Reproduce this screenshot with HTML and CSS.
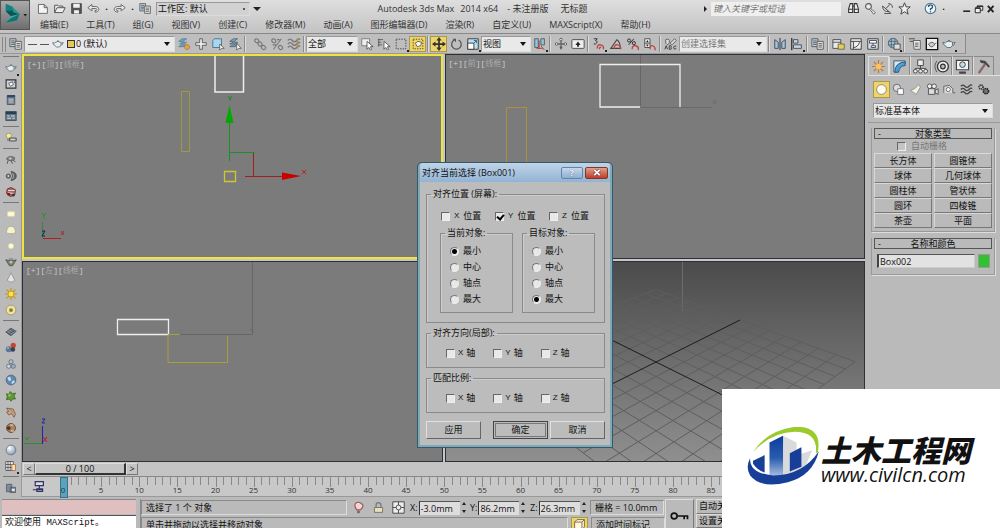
FILE: index.html
```html
<!DOCTYPE html>
<html lang="zh-CN">
<head>
<meta charset="utf-8">
<title>Autodesk 3ds Max 2014 x64</title>
<link rel="stylesheet" href="styles.css">
</head>
<body>
<svg class="defs" aria-hidden="true">
  <defs>
    <linearGradient id="g-blue" x1="0" y1="0" x2="0" y2="1"><stop offset="0" stop-color="#0c3c9c"/><stop offset=".55" stop-color="#2a5cae"/><stop offset="1" stop-color="#a9c0e0"/></linearGradient>
    <radialGradient id="g-ball" cx=".35" cy=".3" r=".8"><stop offset="0" stop-color="#fff"/><stop offset="1" stop-color="#7d8fa6"/></radialGradient>
  </defs>
  <symbol id="i-new" viewBox="0 0 16 16"><path d="M3 3h7l4 4v7H3zM10 3v4h4" fill="#f4f4f4" stroke="#555"/></symbol>
  <symbol id="i-open" viewBox="0 0 16 16"><path d="M2 13V4h4l1 1h5v2M2 13l3-6h10l-3 6z" fill="#eee" stroke="#555" stroke-width="1.2"/></symbol>
  <symbol id="i-save" viewBox="0 0 16 16"><path d="M2 2h12v12H2z" fill="#555" stroke="#444"/><path d="M4 2h8v5H4zM5 10h6v4H5z" fill="#f2f2f2"/></symbol>
  <symbol id="i-undo" viewBox="0 0 16 16"><path d="M1 7l5-4v2.500h4c6 0 6 7 0 7v-2c3 0 3-2.500 0-2.500H6V11z" fill="#e8e8e8" stroke="#555"/></symbol>
  <symbol id="i-redo" viewBox="0 0 16 16"><path d="M15 7l-5-4v2.500H6c-6 0-6 7 0 7v-2c-3 0-3-2.500 0-2.500h4V11z" fill="#e8e8e8" stroke="#555"/></symbol>
  <symbol id="i-layers" viewBox="0 0 16 16"><path d="M1 2h7v9H1z" fill="#bcd0dc" stroke="#555"/><path d="M2.500 4.500h4M2.500 6.500h4M2.500 8.500h4" stroke="#555"/><path d="M7 5h7v9H7z" fill="#e4e4e4" stroke="#555"/><path d="M8.500 7.500h4M8.500 9.500h4M8.500 11.500h4" stroke="#555"/></symbol>
  <symbol id="i-layernew" viewBox="0 0 16 16"><path d="M2 5l4-3h5l-4 3zM3 8l3-2h5l-3 2zM2 11l4-2h5l-3 2z" fill="#6aa6cc" stroke="#4c7890" stroke-width=".8"/><circle cx="11.500" cy="11.500" r="2.800" fill="#eea340" stroke="#b87a30"/></symbol>
  <symbol id="i-plus" viewBox="0 0 16 16"><path d="M6.500 2h3v4.500H14v3H9.500V14h-3V9.500H2v-3h4.500z" fill="#eee" stroke="#555"/></symbol>
  <symbol id="i-boxcur" viewBox="0 0 16 16"><path d="M2 4l2-2h8v8l-2 2H2z" fill="#a8d4ee" stroke="#44708c"/><path d="M10 8v7l2-2h3z" fill="#fff" stroke="#444" stroke-width=".8"/></symbol>
  <symbol id="i-laycur" viewBox="0 0 16 16"><path d="M2 5l4-3h5l-4 3zM2 8l4-2h5l-3 2zM2 11l4-2h5l-3 2z" fill="#78acc8" stroke="#456" stroke-width=".8"/><path d="M10 7v8l2-2h3z" fill="#fff" stroke="#444" stroke-width=".8"/></symbol>
  <symbol id="i-link" viewBox="0 0 16 16"><g fill="none" stroke="#777" stroke-width="1.300"><rect x="2" y="2" width="5" height="4" rx="2" transform="rotate(45 4 4)"/><rect x="5.500" y="6" width="5" height="4" rx="2" transform="rotate(45 8 8)"/><rect x="9.500" y="10" width="5" height="4" rx="2" transform="rotate(45 12 12)"/></g></symbol>
  <symbol id="i-unlink" viewBox="0 0 16 16"><g fill="none" stroke="#777" stroke-width="1.300"><rect x="2" y="2" width="5" height="4" rx="2" transform="rotate(45 4 4)"/><rect x="9.500" y="10" width="5" height="4" rx="2" transform="rotate(45 12 12)"/><path d="M13 2L4 14M8 3h3M3 9h4"/></g></symbol>
  <symbol id="i-wave" viewBox="0 0 16 16"><path d="M1 4q2.500-3 5 0t5 0 4-1M1 8q2.500-3 5 0t5 0 4-1M1 12q2.500-3 5 0t5 0 4-1" fill="none" stroke="#444" stroke-width="1.500"/></symbol>
  <symbol id="i-bind" viewBox="0 0 16 16"><path d="M1 4q2.500-3 5 0t5 0 4-1M1 8q2.500-3 5 0t5 0 4-1M1 12q2.500-3 5 0t5 0 4-1" fill="none" stroke="#777" stroke-width="1.500"/><path d="M12 2v11" stroke="#a88c60" stroke-width="2"/></symbol>
  <symbol id="i-select" viewBox="0 0 16 16"><path d="M2 2h9v8H2z" fill="#eee" stroke="#777"/><path d="M8 5v9l2-2 2 3 1-1-1-3h3z" fill="#fff" stroke="#333" stroke-width=".8"/></symbol>
  <symbol id="i-selname" viewBox="0 0 16 16"><path d="M1 3h6M1 6h4M1 9h5M2 2v9" stroke="#555" fill="none"/><path d="M8 5v9l2-2 2 3 1-1-1-3h3z" fill="#fff" stroke="#333" stroke-width=".8"/></symbol>
  <symbol id="i-marquee" viewBox="0 0 16 16"><path d="M2.500 2.500h11v11h-11z" fill="none" stroke="#333" stroke-dasharray="1.500 1.500"/></symbol>
  <symbol id="i-window" viewBox="0 0 16 16"><path d="M2.500 2.500h11v11h-11z" fill="none" stroke="#333" stroke-dasharray="1.500 1.500"/><path d="M5 7l3-2 4 1-1 4-4 1z" fill="#fff" stroke="#654"/></symbol>
  <symbol id="i-move" viewBox="0 0 16 16"><path d="M8 0l3 4H9v3h3V5l4 3-4 3V9H9v3h2l-3 4-3-4h2V9H4v2L0 8l4-3v2h3V4H5z" fill="#333"/></symbol>
  <symbol id="i-rotate" viewBox="0 0 16 16"><path d="M11 3.500a5.500 5.500 0 1 1-5 0" fill="none" stroke="#555" stroke-width="1.400"/><path d="M4 2h4v4z" fill="#555"/></symbol>
  <symbol id="i-scale" viewBox="0 0 16 16"><path d="M2 2h12v12H2z" fill="#b9def0" stroke="#333"/><path d="M2 7h7v7H2z" fill="#fff" stroke="#333"/><path d="M9 7l3-3M9 4h3v3" fill="none" stroke="#1c638c"/></symbol>
  <symbol id="i-pivot" viewBox="0 0 16 16"><path d="M2 2h4v10H2zM9 2h4v7H9z" fill="#8ec7e4" stroke="#555"/><path d="M7 4v9M4 13h7M9 10l4 5" stroke="#a33" fill="none"/></symbol>
  <symbol id="i-manip" viewBox="0 0 16 16"><path d="M8 2v12M2 8h12" stroke="#666" stroke-width="1.500"/><circle cx="8" cy="3" r="1.500" fill="#eee" stroke="#555"/><circle cx="13" cy="8" r="1.500" fill="#eee" stroke="#555"/><circle cx="3" cy="8" r="1.500" fill="#eee" stroke="#555"/><path d="M6 11h4l-2 3z" fill="#555"/></symbol>
  <symbol id="i-key" viewBox="0 0 16 16"><rect x="1" y="3" width="14" height="10" rx="1" fill="#eee" stroke="#444"/><path d="M8 5l3 4H9v2H7V9H5z" fill="#222"/></symbol>
  <symbol id="i-snap" viewBox="0 0 16 16"><path d="M2 2h4L4 4q4 1 0 4H2" fill="none" stroke="#222"/><path d="M6 13q0-5 4-4t3 5M8.500 14q0-3 2-2" fill="none" stroke="#b44" stroke-width="1.500"/></symbol>
  <symbol id="i-angle" viewBox="0 0 16 16"><path d="M14 13H2L9 3q4 3 4 10" fill="none" stroke="#444" stroke-width="1.200"/><path d="M6 13q0-5 4-4t3 5" fill="none" stroke="#c44" stroke-width="1.500"/></symbol>
  <symbol id="i-percent" viewBox="0 0 16 16"><circle cx="3.500" cy="4" r="1.800" fill="none" stroke="#222"/><circle cx="9" cy="7" r="1.800" fill="none" stroke="#222"/><path d="M9 2L3 9" stroke="#222"/><path d="M7 14q0-5 4-4t3 5" fill="none" stroke="#b44" stroke-width="1.500"/></symbol>
  <symbol id="i-spin" viewBox="0 0 16 16"><path d="M2 2h6v10H2zM2 7h6" fill="#eee" stroke="#444"/><path d="M3.500 6L5 3.500 6.500 6zM3.500 8.500h3L5 11z" fill="#222"/><path d="M8 14q0-5 3-4t3 5" fill="none" stroke="#b44" stroke-width="1.500"/></symbol>
  <symbol id="i-sets" viewBox="0 0 16 16"><path d="M2 3q5-2 4 3t-4 1zM7 7l5-5 2 2-5 5z" fill="#ddd" stroke="#555"/><path d="M1 14l1.500-4L4 14M6 10v4h2q1-1 0-2 1-1 0-2zM14 10.500q-3-1-3 1.500t3 1.500" fill="none" stroke="#333"/></symbol>
  <symbol id="i-mirror" viewBox="0 0 16 16"><path d="M2 13V3l4 3v7zM14 13V3l-4 3v7z" fill="#9cc7e0" stroke="#445"/><path d="M8 1v14" stroke="#223"/></symbol>
  <symbol id="i-align" viewBox="0 0 16 16"><path d="M2 1v14" stroke="#333" stroke-width="1.500"/><path d="M4 3h5v4H4zM4 9h9v4H4z" fill="#c6d8e2" stroke="#445"/></symbol>
  <symbol id="i-ribbon" viewBox="0 0 16 16"><path d="M1 3h9v10H1zM1 6h9" fill="#e9e9e9" stroke="#444"/><path d="M7 8h7v6H7z" fill="#e6cd55" stroke="#665"/></symbol>
  <symbol id="i-curve" viewBox="0 0 16 16"><path d="M2 2h12v12H2z" fill="#eee" stroke="#333"/><path d="M2 5h12M5 5v9M5 12q5 0 7-6" fill="none" stroke="#333"/></symbol>
  <symbol id="i-schem" viewBox="0 0 16 16"><path d="M2 2h12v12H2z" fill="#d4e0e4" stroke="#333"/><path d="M4 4h8v3H4zM6 10h5v2H6zM8 7v3" fill="#fff" stroke="#445"/></symbol>
  <symbol id="i-mat" viewBox="0 0 16 16"><circle cx="7" cy="7" r="5.500" fill="#9cc0d6" stroke="#456"/><path d="M2 5h10M2 9h10M5 2v10M9 2v10" stroke="#567"/><path d="M8 8h7v6H8z" fill="#ddd" stroke="#444"/></symbol>
  <symbol id="i-teapot" viewBox="0 0 16 16"><path d="M4 6q4-3 8 0 1 4-2 6H6Q4 11 4 10 1 9 1 6l3 1M12 7l3-1-2 4" fill="#e5eef2" stroke="#566"/><circle cx="8" cy="4" r="1" fill="#566"/></symbol>
  <symbol id="i-rset" viewBox="0 0 16 16"><path d="M1 2h7M2 5h6" stroke="#444"/><path d="M6 4h8v10H7z" fill="#eee" stroke="#555"/><path d="M8 7h4M8 9h4M8 11h4" stroke="#555"/></symbol>
  <symbol id="i-rframe" viewBox="0 0 16 16"><path d="M1.500 1.500h13v13h-13z" fill="#eee" stroke="#111" stroke-width="1.500"/><path d="M4 8q4-4 7 0-1 4-5 3zM11 8l2-1" fill="#ccc" stroke="#555"/></symbol>
  <symbol id="i-bino" viewBox="0 0 16 16"><path d="M2 13V8l2-6h3v11zM9 13V2h3l2 6v5zM7 5h2M2 9h5M9 9h5" fill="#eee" stroke="#333" stroke-width="1.300"/></symbol>
  <symbol id="i-keyring" viewBox="0 0 16 16"><circle cx="5.500" cy="5.500" r="3.500" fill="#eee" stroke="#555" stroke-width="1.300"/><path d="M8 8l6 5-2 2-5-6" fill="#eee" stroke="#555"/></symbol>
  <symbol id="i-sat" viewBox="0 0 16 16"><path d="M2 5q0 7 8 7zM6 8l5-5M9 2q5 0 5 5M4 14h8l-3-3" fill="#eee" stroke="#444" stroke-width="1.200"/></symbol>
  <symbol id="i-star" viewBox="0 0 16 16"><path d="M8 1l2 5h5l-4 3.500 1.500 5.500L8 12l-4.500 3L5 9.500 1 6h5z" fill="#eee" stroke="#444" stroke-width="1.200"/></symbol>
  <symbol id="i-help" viewBox="0 0 16 16"><circle cx="8" cy="8" r="6.500" fill="#f5f8fa" stroke="#44708f" stroke-width="1.300"/><path d="M5.500 6q0-2.500 2.500-2.500t2.500 2.500Q10.500 7.500 8 8.500V10M8 11.500V13" fill="none" stroke="#1d527a" stroke-width="1.700"/></symbol>
  <symbol id="i-min" viewBox="0 0 16 16"><path d="M2 11.500h11" stroke="#222" stroke-width="2.500"/></symbol>
  <symbol id="i-restore" viewBox="0 0 16 16"><path d="M5 3h9v7H5zM5 4h9" fill="#eee" stroke="#222" stroke-width="1.500"/><path d="M2 6h8v8H2zM2 7h8" fill="#eee" stroke="#222" stroke-width="1.500"/></symbol>
  <symbol id="i-close" viewBox="0 0 16 16"><path d="M3 3l9 10M12 3L3 13" stroke="#222" stroke-width="3"/></symbol>
  <symbol id="i-photo" viewBox="0 0 16 16"><path d="M1.500 2.500h13v11h-13z" fill="#ccd3d8" stroke="#333" stroke-width="1.500"/><path d="M5 7l5-2 1 4-4 2zM12 4h2M12 6h2" fill="#fff" stroke="#444"/></symbol>
  <symbol id="i-calc" viewBox="0 0 16 16"><path d="M3 2h10v12H3z" fill="#7b8996" stroke="#445"/><path d="M3 3h10" stroke="#27466c" stroke-width="3"/><path d="M5 7h6M5 9h6M5 11h6" stroke="#c4ccd2"/></symbol>
  <symbol id="i-table" viewBox="0 0 16 16"><path d="M1 2h14v12H1z" fill="#687884" stroke="#345"/><path d="M1 4h14" stroke="#26405a" stroke-width="3"/><path d="M3 8h3M8 8h5M3 11h5M10 11h3" stroke="#e0e0e0" stroke-width="1.500"/></symbol>
  <symbol id="i-lister" viewBox="0 0 16 16"><circle cx="5" cy="5" r="3.500" fill="#f5eca0" stroke="#998f50"/><path d="M4 9v3M6 8h9v4H6z" fill="#aaa" stroke="#444"/><path d="M8 10h5" stroke="#eee"/></symbol>
  <symbol id="i-cam" viewBox="0 0 16 16"><path d="M2 6q5-5 11-1l-1 3-4 1-5-1z" fill="#888" stroke="#555"/><path d="M4 9l-1 4M8 9l2 4M11 8l3 3" stroke="#555" stroke-width="1.300"/><circle cx="7" cy="6" r="1.300" fill="#ddd"/></symbol>
  <symbol id="i-gear" viewBox="0 0 16 16"><circle cx="4.500" cy="8" r="3.500" fill="#666"/><circle cx="4.500" cy="8" r="1.200" fill="#ddd"/><path d="M8 2q7 1 7 6t-7 6q4-6 0-12z" fill="#666" stroke="#444"/><path d="M10 4q3 4 0 8" fill="none" stroke="#bbb"/></symbol>
  <symbol id="i-robot" viewBox="0 0 16 16"><path d="M3 4l5-2 6 3-1 7-6 2-5-4z" fill="#a66" stroke="#522"/><path d="M4 6h9M4 9l8 1" stroke="#e5d5d5" stroke-width="1.500"/><circle cx="5" cy="11" r="2" fill="#722"/><circle cx="11" cy="12" r="2" fill="#433"/></symbol>
  <symbol id="i-plane" viewBox="0 0 16 16"><path d="M3.500 5h9v6h-9z" fill="#fffbd2" stroke="#e0dbaa"/></symbol>
  <symbol id="i-dome" viewBox="0 0 16 16"><path d="M2 12q0-9 6-9t6 9q-6 2-12 0z" fill="#f7f3cc" stroke="#aaa888"/></symbol>
  <symbol id="i-dot" viewBox="0 0 16 16"><circle cx="8" cy="8" r="3.500" fill="#fffccd" stroke="#dcd8a8"/></symbol>
  <symbol id="i-pot2" viewBox="0 0 16 16"><path d="M1 5l4 1h7l3-1-3 5-2 3H6L4 10z" fill="#788070" stroke="#454c40"/><circle cx="8" cy="8" r="2" fill="#b9c4ac"/><path d="M5 4h6" stroke="#555"/></symbol>
  <symbol id="i-cone" viewBox="0 0 16 16"><path d="M8 1l5 10q-5 5-10 0z" fill="#e5e5e5" stroke="#888"/></symbol>
  <symbol id="i-sun" viewBox="0 0 16 16"><path d="M8 0v16M0 8h16M2 2l12 12M14 2L2 14" stroke="#c79a18" stroke-width="1.500"/><circle cx="8" cy="8" r="4" fill="#ffe04a" stroke="#b88c12"/></symbol>
  <symbol id="i-target" viewBox="0 0 16 16"><circle cx="8" cy="8" r="6.500" fill="#ece3a4" stroke="#9b8c54"/><circle cx="8" cy="8" r="2.500" fill="#8a7a30"/></symbol>
  <symbol id="i-mesh" viewBox="0 0 16 16"><path d="M1 8l7-5 7 4-7 6zM4 6l7 4M6 4l7 4M5 11l7-5M2 8l6 4" fill="#8c96a4" stroke="#3c4450"/></symbol>
  <symbol id="i-balls" viewBox="0 0 16 16"><circle cx="11" cy="4.500" r="3.500" fill="#c54436"/><circle cx="5" cy="9.500" r="4" fill="#5d7896"/><circle cx="10.500" cy="10" r="3" fill="#354255"/><circle cx="4" cy="8" r="1" fill="#dde"/></symbol>
  <symbol id="i-tri" viewBox="0 0 16 16"><circle cx="8" cy="5" r="2.800" fill="#aebfcc" stroke="#567"/><circle cx="5" cy="11" r="2.800" fill="#c6d3dc" stroke="#567"/><circle cx="11" cy="11" r="2.800" fill="#98b0c2" stroke="#567"/></symbol>
  <symbol id="i-globe" viewBox="0 0 16 16"><circle cx="8" cy="8" r="6.500" fill="#6289ae" stroke="#3c5c7c"/><path d="M3 5q4-3 5 1t-3 3zM9 10q5-3 4 1l-4 3z" fill="#c3d8e6"/></symbol>
  <symbol id="i-tree" viewBox="0 0 16 16"><path d="M2 5l3 1 2-4 3 3 4-1-2 4 2 4-4 0-2 3-2-3-4 1 1-4z" fill="#5f9a34" stroke="#35621e"/><circle cx="6" cy="7" r="1.500" fill="#a9cc72"/></symbol>
  <symbol id="i-hand" viewBox="0 0 16 16"><path d="M2 3l9 1 3 7-2 4-3-5-4 2-3-4 3-1z" fill="#c9a284" stroke="#765238"/><path d="M4 2l7 7" stroke="#7b8a4c"/></symbol>
  <symbol id="i-ring" viewBox="0 0 16 16"><circle cx="8" cy="8" r="6" fill="#a98466" stroke="#573d2a"/><circle cx="5" cy="8" r="2.500" fill="#4b3626"/><path d="M7 4h4M8 12h4" stroke="#edd6bc" stroke-width="1.500"/></symbol>
  <symbol id="i-ball" viewBox="0 0 16 16"><circle cx="8" cy="8" r="6.500" fill="url(#g-ball)" stroke="#5d6f88"/></symbol>
  <symbol id="i-grid2" viewBox="0 0 16 16"><path d="M1 2h10v12H1zM4 2v12M7 2v12M1 6h10M1 10h10" fill="#eee" stroke="#444"/><path d="M9 6h5v8H9z" fill="#f5ddbc" stroke="#a86c32"/></symbol>
  <symbol id="i-props" viewBox="0 0 16 16"><path d="M2 3h7v10H2zM7 7h7v7H7z" fill="#7d8b9c" stroke="#4c5664"/><path d="M9 9h4v3H9z" fill="#e5e5e5"/></symbol>
  <symbol id="i-create" viewBox="0 0 16 16"><path d="M8 1v14M1 8h14M3 3l10 10M13 3L3 13" stroke="#c8762a" stroke-width="1.300"/><circle cx="8" cy="8" r="3" fill="#ffc35c"/></symbol>
  <symbol id="i-modify" viewBox="0 0 16 16"><path d="M2 2h12v3Q6 6 6 14H2z" fill="#d5e7f2" stroke="#456"/><path d="M3 14Q3 4 14 3v4Q8 7 7 14z" fill="#4e9ed0" stroke="#1e5a84"/></symbol>
  <symbol id="i-hier" viewBox="0 0 16 16"><path d="M5 1h6v6H5zM8 7v3M2.500 12v-2h11v2M8 10v2" fill="#eee" stroke="#444"/><circle cx="2.500" cy="13" r="2" fill="#eee" stroke="#444"/><circle cx="8" cy="13" r="2" fill="#eee" stroke="#444"/><circle cx="13.500" cy="13" r="2" fill="#eee" stroke="#444"/></symbol>
  <symbol id="i-motion" viewBox="0 0 16 16"><circle cx="9.500" cy="8" r="5.800" fill="#eee" stroke="#333" stroke-width="1.400"/><circle cx="9.500" cy="8" r="2.500" fill="#bbb" stroke="#333" stroke-width="1.300"/><path d="M3 2Q-1 8 3 14" fill="none" stroke="#555"/></symbol>
  <symbol id="i-display" viewBox="0 0 16 16"><path d="M1.500 1.500h13v10h-13zM5 14h6v1H5z" fill="#f2f2f2" stroke="#444" stroke-width="1.200"/><circle cx="8" cy="6" r="3" fill="#c2dcea" stroke="#444"/></symbol>
  <symbol id="i-hammer" viewBox="0 0 16 16"><path d="M10 5L3 15" stroke="#866" stroke-width="2.500"/><path d="M4 1l6 1 5 6-2 1-3-4-5-1z" fill="#444"/></symbol>
  <symbol id="i-geo" viewBox="0 0 16 16"><circle cx="8" cy="8" r="6" fill="#fffdf0" stroke="#777"/></symbol>
  <symbol id="i-shape" viewBox="0 0 16 16"><circle cx="6" cy="6" r="4.500" fill="#ddd" stroke="#555"/><path d="M7 7h7v7H7z" fill="#fff" stroke="#667"/></symbol>
  <symbol id="i-light" viewBox="0 0 16 16"><path d="M12 2l2 3-5 9-3-2-4-3 5-2z" fill="#f5f2e0" stroke="#888"/></symbol>
  <symbol id="i-camera" viewBox="0 0 16 16"><circle cx="4.500" cy="4" r="2.800" fill="#eee" stroke="#444"/><circle cx="10" cy="4" r="2.800" fill="#eee" stroke="#444"/><path d="M3 7h8v7H3zM11 9l4-2v7l-4-2z" fill="#ddd" stroke="#444"/></symbol>
  <symbol id="i-tape" viewBox="0 0 16 16"><path d="M1 12V4l7-1 4 4v5h3" fill="#ddd" stroke="#555"/><circle cx="6.500" cy="8" r="2.500" fill="#fff" stroke="#555"/></symbol>
  <symbol id="i-gears" viewBox="0 0 16 16"><circle cx="5" cy="5" r="2.500" fill="none" stroke="#333" stroke-width="2" stroke-dasharray="1.500 .7"/><circle cx="11" cy="10" r="3.200" fill="#777" stroke="#222" stroke-width="2" stroke-dasharray="1.800 .8"/></symbol>
  <symbol id="i-bulb" viewBox="0 0 16 16"><path d="M6 11Q2 6 4.500 3t7 0T10 11z" fill="#f3d5d5" stroke="#955" stroke-width="1.400"/><path d="M6.500 12h3v3h-3z" fill="#855"/></symbol>
  <symbol id="i-lock" viewBox="0 0 16 16"><path d="M5 8V5q0-3 3-3t3 3v3" fill="none" stroke="#777" stroke-width="1.500"/><path d="M3 8h10v6H3z" fill="#e5deb8" stroke="#666"/></symbol>
  <symbol id="i-iso" viewBox="0 0 16 16"><path d="M1 1h14v14H1z" fill="#eee" stroke="#333"/><circle cx="8" cy="8" r="3" fill="none" stroke="#333"/><path d="M8 1v4M8 11v4M1 8h4M11 8h4" stroke="#333"/></symbol>
  <symbol id="i-bigkey" viewBox="0 0 24 12"><circle cx="5" cy="6" r="3.500" fill="none" stroke="#111" stroke-width="2"/><path d="M9 6h13M17 6v4M21 6v4" stroke="#111" stroke-width="2"/></symbol>
  <symbol id="i-cube" viewBox="0 0 16 16"><path d="M2 5l3-3h9v9l-3 3H2zM2 5h9v9M11 5l3-3" fill="#fff8dd" stroke="#654"/></symbol>
  <symbol id="i-track" viewBox="0 0 16 16"><path d="M4 2h10v5H4zM1 12h12M9 7v4M6 11h7v3H6z" fill="#ddd" stroke="#336" stroke-width="1.500"/></symbol>
</svg>

<div class="app">
  <header class="top">
    <button class="logo" aria-label="应用程序菜单">
      <svg viewBox="0 0 30 30"><path d="M5 3l7 3 5 7-5-1z" fill="#5cb9b4"/><path d="M5 3v8l6 3 6-1-5-7z" fill="#16807e"/><path d="M5 11l8-1 7 4-9 3z" fill="#0c5555"/><path d="M20 14l-9 2-6 6 9-3z" fill="#3ba6a2"/><path d="M20 14l-3 7-12 2 5-4z" fill="#127170"/><path d="M12 6l8 8-7-2z" fill="#259692"/><path d="M24 14h4l-2 2.500z" fill="#222"/></svg>
    </button>
    <div class="bars">
      <div class="titlebar">
        <div class="quick">
          <button class="ib" aria-label="新建"><svg><use href="#i-new"/></svg></button>
          <button class="ib" aria-label="打开"><svg><use href="#i-open"/></svg></button>
          <button class="ib" aria-label="保存"><svg><use href="#i-save"/></svg></button>
          <button class="ib" aria-label="撤消"><svg><use href="#i-undo"/></svg></button>
          <span class="dotm">·</span>
          <button class="ib" aria-label="重做"><svg><use href="#i-redo"/></svg></button>
          <span class="dotm">·</span>
          <button class="ib" aria-label="项目"><svg><use href="#i-layers"/></svg></button>
          <span class="sel sel-ws"><select aria-label="工作区"><option>工作区: 默认</option></select></span>
          <span class="tri"></span>
        </div>
        <h1 class="title"><span>Autodesk 3ds Max</span><span>2014 x64</span><span class="unreg">- 未注册版</span><span class="unnamed">无标题</span></h1>
        <div class="info">
          <span class="tri-r"></span>
          <input class="search" type="text" placeholder="键入关键字或短语" aria-label="搜索">
          <button class="ib" aria-label="查找"><svg><use href="#i-bino"/></svg></button>
          <button class="ib" aria-label="登录"><svg><use href="#i-keyring"/></svg></button>
          <button class="ib" aria-label="通讯"><svg><use href="#i-sat"/></svg></button>
          <button class="ib" aria-label="收藏"><svg><use href="#i-star"/></svg></button>
          <button class="ib help" aria-label="帮助"><svg><use href="#i-help"/></svg></button>
          <span class="dotm">·</span>
          <div class="winbtns">
            <button aria-label="最小化"><svg><use href="#i-min"/></svg></button>
            <button aria-label="还原"><svg><use href="#i-restore"/></svg></button>
            <button aria-label="关闭"><svg><use href="#i-close"/></svg></button>
          </div>
        </div>
      </div>
      <nav class="menu">
        <a href="#">编辑(E)</a><a href="#">工具(T)</a><a href="#">组(G)</a><a href="#">视图(V)</a><a href="#">创建(C)</a><a href="#">修改器(M)</a><a href="#">动画(A)</a><a href="#">图形编辑器(D)</a><a href="#">渲染(R)</a><a href="#">自定义(U)</a><a href="#">MAXScript(X)</a><a href="#">帮助(H)</a>
      </nav>
    </div>
  </header>

  <div class="toolrow">
    <div class="toolbar">
      <i class="grip"></i>
      <button class="ib" aria-label="层管理器"><svg><use href="#i-layers"/></svg></button>
      <span class="sel sel-layer"><span class="layer-ic"><b></b><b></b><svg><use href="#i-teapot"/></svg><em></em></span><select aria-label="层"><option>0 (默认)</option></select></span>
      <button class="ib" aria-label="新建层"><svg><use href="#i-layernew"/></svg></button>
      <button class="ib" aria-label="添加到层"><svg><use href="#i-plus"/></svg></button>
      <button class="ib" aria-label="选择层对象"><svg><use href="#i-boxcur"/></svg></button>
      <button class="ib" aria-label="设置当前层"><svg><use href="#i-laycur"/></svg></button>
      <i class="sep wide"></i>
      <button class="ib" aria-label="链接"><svg><use href="#i-link"/></svg></button>
      <button class="ib" aria-label="断开链接"><svg><use href="#i-unlink"/></svg></button>
      <button class="ib" aria-label="绑定"><svg><use href="#i-bind"/></svg></button>
      <i class="sep"></i>
      <span class="sel sel-all"><select aria-label="选择过滤器"><option>全部</option></select></span>
      <button class="ib" aria-label="选择对象"><svg><use href="#i-select"/></svg></button>
      <button class="ib" aria-label="按名称选择"><svg><use href="#i-selname"/></svg></button>
      <button class="ib fly" aria-label="选择区域"><svg><use href="#i-marquee"/></svg></button>
      <button class="ib on" aria-label="窗口/交叉"><svg><use href="#i-window"/></svg></button>
      <i class="sep"></i>
      <button class="ib on" aria-label="移动"><svg><use href="#i-move"/></svg></button>
      <button class="ib" aria-label="旋转"><svg><use href="#i-rotate"/></svg></button>
      <button class="ib fly" aria-label="缩放"><svg><use href="#i-scale"/></svg></button>
      <span class="sel sel-view"><select aria-label="参考坐标系"><option>视图</option></select></span>
      <button class="ib fly" aria-label="轴点中心"><svg><use href="#i-pivot"/></svg></button>
      <i class="sep"></i>
      <button class="ib" aria-label="操纵"><svg><use href="#i-manip"/></svg></button>
      <button class="ib" aria-label="键盘快捷键"><svg><use href="#i-key"/></svg></button>
      <i class="sep"></i>
      <button class="ib fly" aria-label="捕捉"><svg><use href="#i-snap"/></svg></button>
      <button class="ib" aria-label="角度捕捉"><svg><use href="#i-angle"/></svg></button>
      <button class="ib" aria-label="百分比捕捉"><svg><use href="#i-percent"/></svg></button>
      <button class="ib" aria-label="微调器捕捉"><svg><use href="#i-spin"/></svg></button>
      <i class="sep"></i>
      <button class="ib" aria-label="编辑选择集"><svg><use href="#i-sets"/></svg></button>
      <span class="sel sel-set"><select aria-label="命名选择集"><option>创建选择集</option></select></span>
      <i class="sep"></i>
      <button class="ib" aria-label="镜像"><svg><use href="#i-mirror"/></svg></button>
      <button class="ib fly" aria-label="对齐"><svg><use href="#i-align"/></svg></button>
      <i class="sep"></i>
      <button class="ib" aria-label="层"><svg><use href="#i-layers"/></svg></button>
      <i class="sep"></i>
      <button class="ib" aria-label="功能区"><svg><use href="#i-ribbon"/></svg></button>
      <button class="ib" aria-label="曲线编辑器"><svg><use href="#i-curve"/></svg></button>
      <button class="ib" aria-label="图解视图"><svg><use href="#i-schem"/></svg></button>
      <i class="sep"></i>
      <button class="ib fly" aria-label="材质编辑器"><svg><use href="#i-mat"/></svg></button>
      <i class="sep"></i>
      <button class="ib" aria-label="渲染设置"><svg><use href="#i-rset"/></svg></button>
      <button class="ib" aria-label="渲染帧窗口"><svg><use href="#i-rframe"/></svg></button>
      <button class="ib fly" aria-label="渲染产品"><svg><use href="#i-teapot"/></svg></button>
    </div>
  </div>

  <div class="work">
    <aside class="side">
      <hr>
      <button class="ib fly" aria-label="渲染"><svg><use href="#i-teapot"/></svg></button>
      <button class="ib" aria-label="帧窗口"><svg><use href="#i-photo"/></svg></button>
      <button class="ib" aria-label="设置"><svg><use href="#i-calc"/></svg></button>
      <button class="ib" aria-label="环境"><svg><use href="#i-table"/></svg></button>
      <hr>
      <button class="ib" aria-label="灯光列表"><svg><use href="#i-lister"/></svg></button>
      <hr>
      <button class="ib" aria-label="摄影机"><svg><use href="#i-cam"/></svg></button>
      <button class="ib" aria-label="声音"><svg><use href="#i-gear"/></svg></button>
      <button class="ib" aria-label="动力学"><svg><use href="#i-robot"/></svg></button>
      <hr>
      <button class="ib" aria-label="平面灯"><svg><use href="#i-plane"/></svg></button>
      <button class="ib" aria-label="穹顶灯"><svg><use href="#i-dome"/></svg></button>
      <button class="ib" aria-label="球灯"><svg><use href="#i-dot"/></svg></button>
      <button class="ib" aria-label="网格灯"><svg><use href="#i-pot2"/></svg></button>
      <button class="ib" aria-label="锥灯"><svg><use href="#i-cone"/></svg></button>
      <button class="ib" aria-label="太阳"><svg><use href="#i-sun"/></svg></button>
      <button class="ib" aria-label="目标灯"><svg><use href="#i-target"/></svg></button>
      <hr>
      <button class="ib" aria-label="平面"><svg><use href="#i-mesh"/></svg></button>
      <button class="ib" aria-label="代理"><svg><use href="#i-balls"/></svg></button>
      <button class="ib" aria-label="元球"><svg><use href="#i-tri"/></svg></button>
      <button class="ib" aria-label="球体"><svg><use href="#i-globe"/></svg></button>
      <button class="ib" aria-label="植物"><svg><use href="#i-tree"/></svg></button>
      <button class="ib" aria-label="毛发"><svg><use href="#i-hand"/></svg></button>
      <button class="ib" aria-label="置换"><svg><use href="#i-ring"/></svg></button>
      <hr>
      <button class="ib" aria-label="材质"><svg><use href="#i-ball"/></svg></button>
      <button class="ib fly" aria-label="阵列"><svg><use href="#i-grid2"/></svg></button>
      <hr>
      <button class="ib" aria-label="属性"><svg><use href="#i-props"/></svg></button>
    </aside>

    <main class="stage">
      <div class="views">
        <section class="view active">
          <p class="vlabel">[+][<span>顶</span>][<span>线框</span>]</p>
          <svg class="scene"><g transform="translate(-24 -56)" fill="none">
            <path d="M215 50v42h28.500V50" stroke="#eee" stroke-width="1.500"/>
            <path d="M181.500 91.500h8v60h-8z" stroke="#a09a3c"/>
            <path d="M229.500 118v43M229.500 152.500h25" stroke="#1c9020"/>
            <path d="M225.500 123l4-18 4 18z" fill="#0a0"/>
            <path d="M232 96l-2 3v2M228 96l2 3" stroke="#1b8a22"/>
            <path d="M253.500 153v23M245 176.500h38" stroke="#a02020"/>
            <path d="M282 172.500l19 3.500-19 4z" fill="#c80000"/>
            <path d="M302 170l4 4M306 170l-4 4" stroke="#c02020"/>
            <path d="M224.500 171.500h11v10h-11z" stroke="#d0c630" stroke-width="1.300"/>
            <path d="M42.500 222v16M42 213l2 3 2-3M44 216v3" stroke="#2b922b"/>
            <path d="M43 238.500h18M61 231l3 4M64 231l-3 4" stroke="#b02020"/>
            <path d="M42 231h3l-3 5h3" stroke="#126"/>
          </g></svg>
        </section>
        <section class="view">
          <p class="vlabel">[+][<span>前</span>][<span>线框</span>]</p>
          <svg class="scene"><g transform="translate(-446 -55)" fill="none">
            <path d="M640.500 55v51" stroke="#666"/>
            <path d="M640 107H600V64.500h80v43" stroke="#eee" stroke-width="1.300"/>
            <path d="M641 107.500h71M713 100l3 4M716 100l-3 4" stroke="#6a6a6a"/>
            <path d="M506.500 165v-57.500h20V165" stroke="#a8923c"/>
          </g></svg>
        </section>
        <section class="view">
          <p class="vlabel">[+][<span>左</span>][<span>线框</span>]</p>
          <svg class="scene"><g transform="translate(-23 -262)" fill="none">
            <path d="M252.500 261v73.500H168M250 329l4 3" stroke="#666"/>
            <path d="M117.500 319.500h51v15h-51z" stroke="#eee" stroke-width="1.300"/>
            <path d="M180 334.500h-12v28h59.500V336" stroke="#a8a03c"/>
            <path d="M179 329l2 3 2-3" stroke="#777"/>
            <path d="M42.500 426v18M42 419h3l-3 4h3" stroke="#22a"/>
            <path d="M24 443.500h18M25 437l2 3 2-3" stroke="#2b922b"/>
            <path d="M43 437l4 5M47 437l-4 5" stroke="#b02030"/>
          </g></svg>
        </section>
        <section class="view persp">
          <svg class="scene"><g transform="translate(-446 -262)" fill="none">
            <path d="M682.500 261v50" stroke="#6c6c6c"/>
            <g id="grid"></g>
          </g></svg>
        </section>
      </div>
      <div class="slider">
        <button aria-label="上一帧">&lt;</button><button class="thumb">0 / 100</button><button aria-label="下一帧">&gt;</button>
      </div>
      <div class="timeline">
        <button class="ib trackbtn" aria-label="迷你曲线编辑器"><svg><use href="#i-track"/></svg></button>
        <div class="ruler" id="ruler"></div>
      </div>
    </main>

    <aside class="panel">
      <div class="tabs">
        <button class="tab cur" aria-label="创建"><svg><use href="#i-create"/></svg></button>
        <button class="tab" aria-label="修改"><svg><use href="#i-modify"/></svg></button>
        <button class="tab" aria-label="层次"><svg><use href="#i-hier"/></svg></button>
        <button class="tab" aria-label="运动"><svg><use href="#i-motion"/></svg></button>
        <button class="tab" aria-label="显示"><svg><use href="#i-display"/></svg></button>
        <button class="tab" aria-label="实用程序"><svg><use href="#i-hammer"/></svg></button>
      </div>
      <div class="cats">
        <button class="ib on" aria-label="几何体"><svg><use href="#i-geo"/></svg></button>
        <button class="ib" aria-label="图形"><svg><use href="#i-shape"/></svg></button>
        <button class="ib" aria-label="灯光"><svg><use href="#i-light"/></svg></button>
        <button class="ib" aria-label="摄影机"><svg><use href="#i-camera"/></svg></button>
        <button class="ib" aria-label="辅助对象"><svg><use href="#i-tape"/></svg></button>
        <button class="ib" aria-label="空间扭曲"><svg><use href="#i-wave"/></svg></button>
        <button class="ib" aria-label="系统"><svg><use href="#i-gears"/></svg></button>
      </div>
      <span class="sel sel-prim"><select aria-label="对象类别"><option>标准基本体</option></select></span>
      <div class="rolls">
        <section class="roll">
          <h2><i>-</i>对象类型</h2>
          <label class="auto"><input type="checkbox" disabled>自动栅格</label>
          <div class="objs">
            <button>长方体</button><button>圆锥体</button>
            <button>球体</button><button>几何球体</button>
            <button>圆柱体</button><button>管状体</button>
            <button>圆环</button><button>四棱锥</button>
            <button>茶壶</button><button>平面</button>
          </div>
        </section>
        <section class="roll">
          <h2><i>-</i>名称和颜色</h2>
          <div class="namerow"><input type="text" value="Box002" aria-label="名称"><button class="swatch" aria-label="颜色"></button></div>
        </section>
      </div>
    </aside>
  </div>

  <footer class="status">
    <div class="listener"><div class="pink"></div><div class="white">欢迎使用 MAXScript。</div></div>
    <div class="mid">
      <div class="srow">
        <p class="inset msg">选择了 1 个 对象</p>
        <button class="ib" aria-label="孤立"><svg><use href="#i-bulb"/></svg></button>
        <button class="ib" aria-label="锁定"><svg><use href="#i-lock"/></svg></button>
        <button class="ib" aria-label="坐标模式"><svg><use href="#i-iso"/></svg></button>
        <label class="coord">X:<input type="text" value="-3.0mm"><i class="spin"></i></label>
        <label class="coord">Y:<input type="text" value="86.2mm"><i class="spin"></i></label>
        <label class="coord">Z:<input type="text" value="26.3mm"><i class="spin"></i></label>
        <p class="inset gridsz">栅格 = 10.0mm</p>
      </div>
      <div class="srow">
        <p class="inset hint">单击并拖动以选择并移动对象</p>
        <button class="ib on" aria-label="时间标记"><svg><use href="#i-cube"/></svg></button>
        <p class="inset gridsz">添加时间标记</p>
      </div>
    </div>
    <button class="bigkey" aria-label="设置关键点"><svg><use href="#i-bigkey"/></svg></button>
    <div class="keys"><button>自动关键点</button><button>设置关键点</button></div>
  </footer>

  <form class="dialog" role="dialog" aria-labelledby="dt">
    <div class="dtitle"><h2 id="dt">对齐当前选择 (Box001)</h2>
      <button type="button" class="dhelp">?</button>
      <button type="button" class="dclose" aria-label="关闭"><svg viewBox="0 0 12 10"><path d="M3 2l6 6M9 2L3 8" stroke="#833" stroke-width="3.500"/><path d="M3 2l6 6M9 2L3 8" stroke="#fff" stroke-width="2"/></svg></button></div>
    <div class="dbody">
      <fieldset class="pos">
        <legend>对齐位置 (屏幕):</legend>
        <div class="checks"><label><input type="checkbox"><s>X</s>位置</label><label><input type="checkbox" checked><s>Y</s>位置</label><label><input type="checkbox"><s>Z</s>位置</label></div>
        <div class="pair">
          <fieldset><legend>当前对象:</legend>
            <label><input type="radio" name="cur" checked>最小</label><label><input type="radio" name="cur">中心</label><label><input type="radio" name="cur">轴点</label><label><input type="radio" name="cur">最大</label>
          </fieldset>
          <fieldset><legend>目标对象:</legend>
            <label><input type="radio" name="tgt">最小</label><label><input type="radio" name="tgt">中心</label><label><input type="radio" name="tgt">轴点</label><label><input type="radio" name="tgt" checked>最大</label>
          </fieldset>
        </div>
      </fieldset>
      <fieldset class="axes"><legend>对齐方向(局部):</legend>
        <div><label><input type="checkbox"><s>X</s>轴</label><label><input type="checkbox"><s>Y</s>轴</label><label><input type="checkbox"><s>Z</s>轴</label></div>
      </fieldset>
      <fieldset class="axes"><legend>匹配比例:</legend>
        <div><label><input type="checkbox"><s>X</s>轴</label><label><input type="checkbox"><s>Y</s>轴</label><label><input type="checkbox"><s>Z</s>轴</label></div>
      </fieldset>
      <div class="dbtns"><button type="button">应用</button><button type="button" class="ok">确定</button><button type="button">取消</button></div>
    </div>
  </form>

  <div class="mark">
    <svg viewBox="0 0 76 62">
      <path d="M37 50V9l14 7v8l4-2v6l12-4-9 22-12 6z" fill="#d9dadc"/>
      <path d="M23 50V16l14-7v42z" fill="url(#g-blue)"/>
      <path d="M6 35l12-6v18q-7-2-12-9zM44 27l12-6v20l-12 5z" fill="#173f97"/>
      <path d="M6 26Q20 4 48 0q30-2 25 26l-2 1Q73 5 49 5 24 6 6 26z" fill="#9aca2c"/>
      <path d="M3 32q-1 16 24 18 30 0 47-25Q68 50 42 57 14 64 3 50-2 42 3 32z" fill="#173f97"/>
    </svg>
    <div class="marktext"><strong>土木工程网</strong><span>www.civilcn.com</span></div>
  </div>
</div>
<script src="viewport.js"></script>
</body>
</html>
```

FILE: styles.css
```css
* { box-sizing: border-box; }
body, h1, h2, p, fieldset, legend, hr { margin: 0; padding: 0; border: 0; font-weight: 400; }
body { overflow: hidden; background: #bababa; color: #111; font: 9px/12px "Open Sans", "Noto Sans CJK SC", sans-serif; }
button, input, select { margin: 0; padding: 0; border: 0; background: none; color: inherit; font: inherit; border-radius: 0; }
svg { display: block; }
.defs { position: absolute; width: 0; height: 0; }
.app { display: flex; flex-direction: column; height: 100vh; position: relative; }

.ib { flex: none; width: 17px; height: 16px; display: grid; place-items: center; position: relative; }
.ib svg { width: 13px; height: 13px; }
.ib.on { background: #f0d566; border: 1px solid #a99950; }
.fly::after { content: ""; position: absolute; right: 0; bottom: 0; border: 1px solid #222; }
.tri { border: 4px solid transparent; border-top-color: #222; border-bottom: 0; }
.tri-r { border: 3px solid transparent; border-left-color: #222; border-right: 0; }
.dotm { width: 9px; text-align: center; font-weight: 700; }

.sel { position: relative; flex: none; display: flex; align-items: center; height: 16px; background: #e9e9e9; border: 1px solid #999; border-right-color: #ddd; border-bottom-color: #ddd; }
.sel select { appearance: none; flex: 1; min-width: 0; padding-left: 1px; height: 14px; }
.sel::after { content: ""; position: absolute; right: 4px; top: 5px; border: 3px solid transparent; border-top: 4px solid #111; border-bottom: 0; pointer-events: none; }

/* title bar and menus */
.top { display: flex; flex: none; background: linear-gradient(#dedede, #c3c3c3); border-bottom: 1px solid #888; }
.logo { flex: none; width: 30px; height: 30px; background: linear-gradient(#aaa, #6e6e6e); border: 1px solid #555; }
.logo svg { width: 28px; height: 28px; }
.bars { flex: 1; min-width: 0; }
.titlebar { display: grid; grid-template-columns: auto 1fr auto; align-items: center; height: 17px; }
.quick { display: flex; align-items: center; padding-left: 4px; }
.sel-ws { width: 94px; height: 14px; margin: 0 3px 0 2px; background: #d2d2d2; }
.sel-ws::after { border: 0; width: 2px; height: 2px; background: #555; }
.sel-ws select { height: 12px; }
.title { display: flex; justify-content: center; font-size: 9px; gap: 6px; color: #333; white-space: nowrap; }
.unreg { margin-left: 3px; }
.unnamed { margin-left: 6px; }
.info { display: flex; align-items: center; padding-right: 2px; }
.search { width: 130px; height: 14px; margin: 0 4px 0 4px; background: #efefef; padding-left: 2px; font-style: italic; }
.search::placeholder { color: #777; opacity: 1; }
.help { margin-left: 9px; }
.winbtns { display: flex; margin-left: 14px; }
.winbtns button { width: 12px; }
.winbtns svg { width: 10px; height: 10px; }
.menu { display: flex; gap: 18px; padding: 1px 0 2px 10px; white-space: nowrap; }
.menu a { color: #333; text-decoration: none; line-height: 13px; }

/* main toolbar */
.toolrow { flex: none; height: 20px; display: flex; }
.toolbar { display: flex; align-items: center; padding: 1px 8px 0 2px; border-right: 1px solid #8a8a8a; border-bottom: 1px solid #999; background: #bebebe; }
.toolbar .ib svg { width: 14px; height: 14px; }
.grip { width: 4px; height: 15px; border-left: 1px solid #888; border-right: 1px solid #888; margin-right: 1px; }
.sep { flex: none; width: 4px; height: 16px; background: linear-gradient(90deg, transparent 1px, #8a8a8a 1px 2px, #ddd 2px 3px, transparent 3px); }
.sep.wide { width: 8px; }
.sel-layer { width: 151px; }
.layer-ic { display: flex; align-items: center; gap: 3px; padding-left: 3px; }
.layer-ic b { width: 9px; height: 1px; background: #555; }
.layer-ic svg { width: 12px; height: 12px; }
.layer-ic em { width: 8px; height: 8px; background: #e5c75a; border: 1px solid #333; }
.sel-all { width: 52px; }
.sel-view { width: 50px; }
.sel-set { width: 88px; color: #777; }

/* work area */
.work { flex: 1; min-height: 0; display: grid; grid-template-columns: 22px 1fr 135px; }
.side { display: flex; flex-direction: column; align-items: center; border-right: 1px solid #999; overflow: hidden; }
.side hr { flex: none; width: 16px; height: 6px; background: linear-gradient(transparent 2px, #777 2px 3px, transparent 3px); }
.side .ib svg { width: 12px; height: 12px; }
.stage { display: flex; flex-direction: column; min-width: 0; min-height: 0; }
.views { flex: 1; min-height: 0; display: grid; grid-template: 205px 1fr / 1fr 1fr; gap: 2px; background: #c6c6c6; }
.view { position: relative; overflow: hidden; background: #7b7b7b; border: 1px solid #2c3038; }
.view.active { border: 2px solid #efe43c; }
.persp { background: linear-gradient(#4b4b4b, #8f8f8f); }
.scene { width: 100%; height: 100%; }
.vlabel { position: absolute; left: 3px; top: 3px; color: #ccc; font: 8px/12px "Liberation Mono", "Noto Sans CJK SC", monospace; white-space: nowrap; }
.vlabel span { color: #aaa; }
.grid-line { stroke: #5e5e5e; stroke-width: 1; }
.grid-axis { stroke: #1c1c1c; stroke-width: 1; }
.slider { flex: none; display: flex; height: 14px; padding: 1px; background: #c4c4c4; }
.slider button { width: 12px; border: 1px solid #ddd; border-right-color: #777; border-bottom-color: #777; line-height: 10px; }
.slider .thumb { width: 91px; border-right: 2px solid #333; border-bottom: 2px solid #333; }
.timeline { flex: none; display: flex; height: 21px; border-top: 1px solid #888; border-bottom: 1px solid #999; background: #c8c8c8; }
.trackbtn { margin: 1px 16px 0 8px; }
.ruler { flex: 1; display: flex; margin-right: 32px; font-size: 8px; }
.frame { flex: 1; min-width: 0; height: 8px; border-left: 1px solid #888; position: relative; }
.frame.five { height: 10px; }
.frame span { position: absolute; left: -10px; width: 18px; top: 8px; text-align: center; line-height: 10px; color: #333; }
.frame.now::before { content: ""; position: absolute; left: -4px; top: 0; width: 6px; height: 19px; background: #5aa2bd; border: 1px solid #34758e; }

/* command panel */
.panel { padding: 2px 0 0 3px; }
.tabs { display: flex; border-bottom: 1px solid #e0e0e0; }
.tab { width: 21px; height: 19px; display: grid; place-items: center; border: 1px solid #8a8a8a; border-left-color: #ddd; border-bottom: 0; }
.tab.cur { border-color: #ddd; }
.tab svg { width: 15px; height: 15px; }
.cats { display: flex; padding: 5px 0 5px 5px; }
.cats .ib { width: 17px; height: 17px; }
.cats .ib svg { width: 13px; height: 13px; }
.sel-prim { width: 120px; margin-left: 5px; height: 15px; }
.rolls { margin-top: 4px; padding: 5px 5px 0 3px; border-top: 1px solid #999; }
.roll { border: 1px solid #999; border-top: 0; padding: 0 2px 3px; margin-bottom: 6px; box-shadow: 1px 1px #ddd; }
.roll h2 { position: relative; border: 1px solid #555; text-align: center; font-size: 9px; line-height: 9px; height: 11px; }
.roll h2 i { position: absolute; left: 3px; top: 0; font-style: normal; }
.auto { display: flex; align-items: center; gap: 5px; padding: 1px 0 1px 23px; line-height: 12px; color: #777; }
.objs { display: grid; grid-template-columns: 1fr 1fr; column-gap: 2px; }
.objs button { height: 15px; line-height: 12px; border: 1px solid #d8d8d8; border-right-color: #777; border-bottom-color: #777; }
.namerow { display: flex; gap: 3px; padding: 5px 2px 3px 3px; }
.namerow input { flex: 1; min-width: 0; height: 14px; padding-left: 1px; background: #e2e2e2; border: 1px solid #ccc; border-top-color: #555; border-left: 2px solid #444; }
.swatch { width: 12px; height: 14px; background: #2fc12f; border: 1px solid #999; }

/* status bar */
.status { flex: none; display: flex; height: 31px; overflow: hidden; padding-top: 2px; }
.listener { flex: none; width: 136px; padding-left: 2px; }
.pink { height: 15px; background: #dfbfbf; border-top: 1px solid #888; }
.white { height: 20px; margin-top: 1px; padding-left: 3px; background: #fff; border-top: 1px solid #555; font: 9px/14px "Liberation Mono", "Noto Sans CJK SC", monospace; white-space: nowrap; }
.mid { flex: none; width: 525px; margin-left: 4px; border-left: 1px solid #888; }
.srow { display: flex; align-items: center; height: 17px; white-space: nowrap; gap: 3px; }
.inset { height: 15px; line-height: 13px; padding-left: 4px; border: 1px solid #8a8a8a; border-right-color: #ddd; border-bottom-color: #ddd; }
.msg { width: 206px; }
.hint { flex: 1; }
.gridsz { width: 74px; }
.coord { display: flex; align-items: center; gap: 1px; width: 57px; }
.coord input { width: 41px; height: 14px; padding-left: 1px; background: #ddd; border-top: 1px solid #555; border-left: 1px solid #333; }
.spin { flex: none; width: 6px; height: 13px; position: relative; }
.spin::before, .spin::after { content: ""; position: absolute; left: 1px; border: 2px solid transparent; }
.spin::before { top: 1px; border-bottom: 3px solid #222; border-top: 0; }
.spin::after { bottom: 1px; border-top: 3px solid #222; border-bottom: 0; }
.bigkey { flex: none; width: 29px; height: 34px; display: grid; place-items: center; border: 1px solid #ddd; border-right-color: #777; }
.bigkey svg { width: 20px; height: 10px; }
.keys { display: flex; flex-direction: column; margin-left: 2px; }
.keys button { height: 16px; padding: 0 2px; border: 1px solid #ddd; border-bottom-color: #777; }

/* align dialog */
.dialog { position: absolute; left: 418px; top: 163px; width: 194px; background: #bcbcbc; border: 2px solid #7fa9b8; border-top: 0; border-radius: 4px 4px 0 0; box-shadow: 0 0 0 1px #335a66; }
.dtitle { display: flex; align-items: center; height: 19px; padding-left: 2px; background: linear-gradient(#c0d4e8, #93b3d4); border-radius: 4px 4px 0 0; }
.dtitle h2 { flex: 1; font-size: 9px; }
.dhelp { width: 22px; height: 12px; line-height: 10px; color: #fff; font-weight: 700; background: linear-gradient(#c6d8ec, #8eaecf); border: 1px solid #6286a8; border-radius: 2px; margin-right: 2px; text-shadow: 0 0 1px #246; }
.dclose { width: 23px; height: 12px; display: grid; place-items: center; background: linear-gradient(#e0a090, #c03c28); border: 1px solid #803828; border-radius: 2px; margin-right: 2px; }
.dclose svg { width: 12px; height: 9px; }
.dbody { padding: 6px 5px 6px 6px; }
.dbody fieldset { border: 1px solid #8a8a8a; box-shadow: inset 1px 1px #ccc; min-width: 0; }
.dbody legend { margin-left: 4px; padding: 0 2px; line-height: 12px; }
.dbody label { display: flex; align-items: center; white-space: nowrap; }
.dbody s { text-decoration: none; font: 8px/12px "Liberation Sans", sans-serif; }
input[type="checkbox"] { appearance: none; flex: none; width: 9px; height: 9px; background: #e8e8e8; border: 1px solid #eee; border-top-color: #666; border-left-color: #666; }
.auto input[type="checkbox"] { background: #c4c4c4; }
input[type="checkbox"]:checked::after { content: ""; display: block; width: 3px; height: 5px; margin: 0 0 0 2px; border: solid #000; border-width: 0 2px 2px 0; transform: rotate(40deg); }
input[type="radio"] { appearance: none; flex: none; width: 9px; height: 9px; border-radius: 50%; background: #e8e8e8; border: 1px solid #eee; border-top-color: #777; border-left-color: #777; }
input[type="radio"]:checked { background: radial-gradient(#000 2px, #e8e8e8 3px); }
.dbody .pos { padding: 10px 0 9px; }
.checks { display: flex; justify-content: space-between; padding: 0 15px 5px 14px; }
.checks label { gap: 4px; }
.pair { display: grid; grid-template-columns: 1fr 1fr; gap: 9px; padding: 0 9px 0 13px; }
.dbody .pair fieldset { padding: 4px 0 5px; }
.pair label { height: 16px; gap: 4px; padding-left: 9px; }
.axes { margin-top: 4px; }
.axes div { display: flex; gap: 18px; padding: 8px 0 8px 19px; }
.axes label { gap: 3px; }
.dbtns { display: flex; gap: 2px; margin-top: 8px; }
.dbtns button { width: 55px; height: 18px; border: 1px solid #e0e0e0; border-right-color: #666; border-bottom-color: #666; }
.dbtns .ok { margin-left: auto; border: 1px solid #444; box-shadow: inset 0 0 0 1px #bbb, inset 0 0 0 2px #777; }

/* site mark */
.mark { position: absolute; right: 0; bottom: 0; width: 278px; height: 139px; display: flex; align-items: center; padding: 0 20px 4px 25px; background: #fff; }
.mark svg { flex: none; width: 74px; height: 60px; }
.marktext { display: flex; flex-direction: column; padding-top: 4px; white-space: nowrap; font-style: italic; color: #111; }
.marktext strong { font: italic 900 30px/32px "Noto Sans CJK SC", sans-serif; }
.marktext span { font-size: 20px; line-height: 20px; }
```

FILE: viewport.js
```js
// Home grid of the perspective view: project plane coordinates (u, v) in -1..1.
function project(u, v) {
  const w = 1 + 0.159 * u - 0.1805 * v;
  return [(201.7 * u - 20.9 * v + 656) / w, (8.9 * u - 17 * v + 362) / w];
}
const SVG = 'http://www.w3.org/2000/svg';
const grid = document.getElementById('grid');
function line(a, b, cls) {
  const el = document.createElementNS(SVG, 'path');
  el.setAttribute('d', 'M' + a.join(' ') + 'L' + b.join(' '));
  el.setAttribute('class', cls);
  grid.appendChild(el);
}
const N = 7;
for (let i = -N; i <= N; i++) {
  if (i === 0) continue;
  line(project(i / N, -1), project(i / N, 1), 'grid-line');
  line(project(-1, i / N), project(1, i / N), 'grid-line');
}
line(project(-1, 0), project(1, 0), 'grid-axis');
line(project(0, -1), project(0, 1), 'grid-axis');

// Time ruler: one cell for each frame, a number at every fifth.
const ruler = document.getElementById('ruler');
for (let f = 0; f <= 100; f++) {
  const cell = document.createElement('div');
  cell.className = 'frame' + (f % 5 ? '' : ' five') + (f === 0 ? ' now' : '');
  if (f % 5 === 0) {
    const t = document.createElement('span');
    t.textContent = f;
    cell.appendChild(t);
  }
  ruler.appendChild(cell);
}
```
